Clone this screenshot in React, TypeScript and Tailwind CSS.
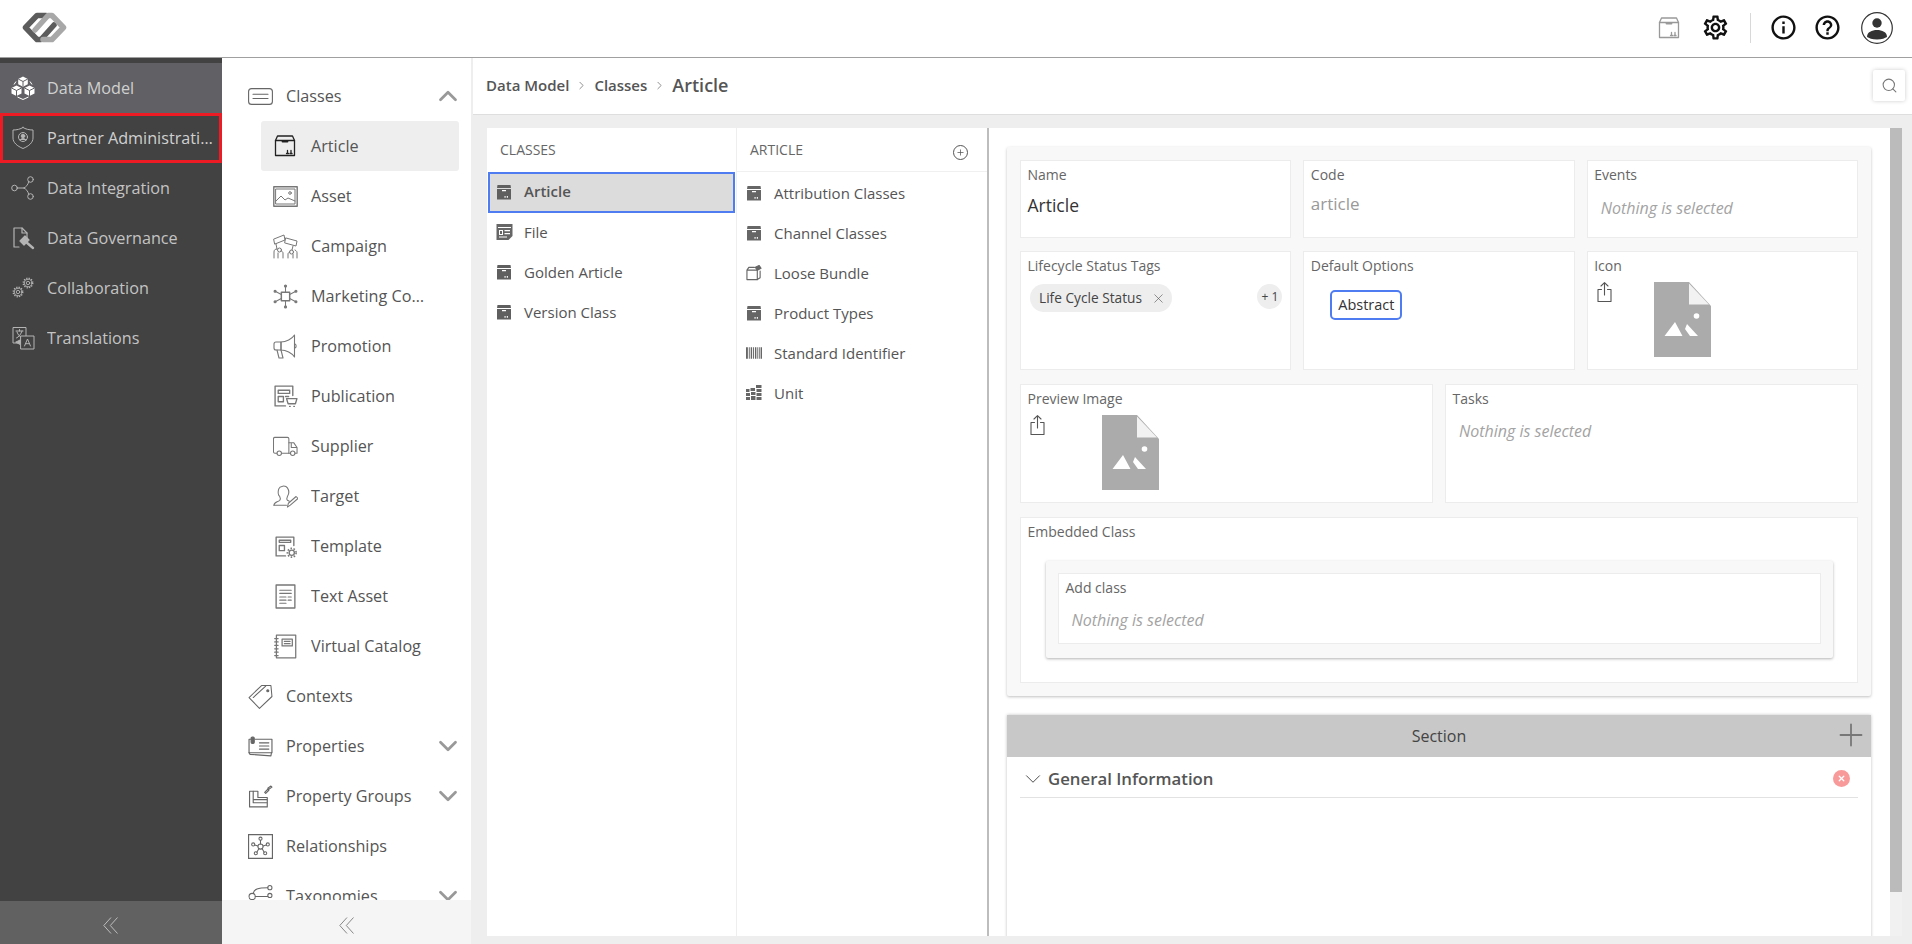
import React from 'react';
import { ChevronUp, ChevronDown, ChevronRight, Search, X, Plus } from 'lucide-react';
import { MdOutlineSettings, MdInfoOutline, MdHelpOutline } from 'react-icons/md';

type IconProps = { className?: string };

// line icons share the same stroke setup
const Line = ({ className, children, box = '0 0 24 24', sw = 1 }: IconProps & { children: React.ReactNode; box?: string; sw?: number }) => (
  <svg viewBox={box} fill="none" stroke="currentColor" strokeWidth={sw} strokeLinecap="round" strokeLinejoin="round" className={className}>
    {children}
  </svg>
);

const Gear = ({ cx, cy, r }: { cx: number; cy: number; r: number }) => (
  <g>
    <circle cx={cx} cy={cy} r={r} />
    <circle cx={cx} cy={cy} r={r * 0.45} />
    <circle cx={cx} cy={cy} r={r * 1.25} strokeWidth={1.4} strokeDasharray="1.2 1.3" strokeLinecap="butt" />
  </g>
);

const Logo = () => (
  <svg viewBox="0 0 45 31" fill="none" strokeWidth={5.500} strokeLinecap="round" strokeLinejoin="round" className="w-[45px] h-[31px]">
    <path d="M24 3.500 H15 L3.500 15.500 L15 27.500 H19 L32 13" stroke="#5c5c5c" />
    <path d="M21 27.500 H30 L41.500 15.500 L30 3.500 H26 L13 18" stroke="#a8a8a8" />
  </svg>
);

const DoubleLeft = ({ className }: IconProps) => (
  <svg viewBox="0 0 15 17" fill="none" stroke="currentColor" strokeWidth={1} className={className}>
    <path d="M8 .5L.8 8.500 8 16.500M14.500 .5L7.300 8.500l7.200 8" />
  </svg>
);

const CubesIcon = ({ className }: IconProps) => (
  <svg viewBox="0 0 24 24" fill="currentColor" className={className}>
    <path d="M12 .5l4.800 2.500v5.200L12 10.700 7.200 8.200V3z" />
    <path d="M5.500 9.500l5 2.500v5.500l-5 2.500-5-2.500V12z" />
    <path d="M18.500 9.500l5 2.500v5.500l-5 2.500-5-2.500V12z" />
    <path d="M6.500 21l5.500 2.500 5.500-2.500M3 8.500l2-3M21 8.500l-2-3" fill="none" stroke="currentColor" strokeWidth="1" />
    <path d="M7.200 3L12 5.500 16.800 3M12 5.500v5M.5 12l5 2.500 5-2.500M5.500 14.500V20M13.500 12l5 2.500 5-2.500M18.500 14.500V20" fill="none" stroke="#616165" strokeWidth="1" />
  </svg>
);

const ShieldIcon = ({ className }: IconProps) => (
  <Line className={className}>
    <path d="M12 1.500c2.500 1.600 6 2.500 10 2.500v8c0 4.500-4 8-10 10.500C6 20 2 16.500 2 12V4c4 0 7.500-.9 10-2.500z" />
    <circle cx="12" cy="11" r="4.500" />
    <circle cx="12" cy="10" r="1.800" fill="currentColor" />
    <path d="M9 14c1-2 5-2 6 0" fill="currentColor" />
  </Line>
);

const ShareNodes = ({ className }: IconProps) => (
  <Line className={className}>
    <circle cx="3.500" cy="12" r="2.800" />
    <circle cx="19.500" cy="3.500" r="2.800" />
    <circle cx="19.500" cy="20.500" r="2.800" />
    <path d="M6.300 12H13M13 12c2-1 4-3 4.800-6.500M13 12c2 1 4 3 4.800 6.500" />
  </Line>
);

const GavelDoc = ({ className }: IconProps) => (
  <Line className={className} sw={1.2}>
    <path d="M16 13V7l-5-5H3v19h5" />
    <path d="M11 2v5h5" />
    <path d="M9 15l5-5 4 4-5 5z" fill="currentColor" />
    <path d="M15 16l7 6" strokeWidth={2.400} />
  </Line>
);

const GearsIcon = ({ className }: IconProps) => (
  <Line className={className} sw={.9}>
    <Gear cx={7} cy={16} r={3.800} />
    <Gear cx={17} cy={7} r={3.800} />
  </Line>
);

const TranslateIcon = ({ className }: IconProps) => (
  <Line className={className} sw={1}>
    <path d="M9 17H2V1.500h13V10" />
    <path d="M5 5h7M8.500 3.500V5M11 5c-1 3-3 6-5.500 7M6 6c1 3 3 5 5 6" />
    <path d="M10 10h13v13H10z" fill="#424242" />
    <path d="M13.500 20l3-7 3 7M14.800 17.700h3.400" />
    <path d="M5 16l4-2v4z" fill="currentColor" />
  </Line>
);

const ClassesIcon = ({ className }: IconProps) => (
  <Line className={className} box="0 0 25 17" sw={1.100}>
    <rect x=".6" y=".6" width="23.800" height="15.800" rx="3" />
    <path d="M5 6.300h15M5 10.500h15" />
  </Line>
);

const BoxIcon = ({ className }: IconProps) => (
  <Line className={className} sw={1.300}>
    <path d="M2.500 6.500V21.500h19V6.500l-2-4.500h-15z" />
    <path d="M2.500 6.500h19" />
    <path d="M9.500 7.500h5" strokeWidth={1.800} />
    <path d="M14.500 19.500v-3M18 19.500v-3M13.500 19.500h2M17 19.500h2" />
  </Line>
);

// solid variant used in the class lists
const BoxSolid = ({ className }: IconProps) => (
  <svg viewBox="0 0 16 16" fill="currentColor" className={className}>
    <path d="M1 5h14v10.500H1z" />
    <path d="M1.500 1h13L15 4H1z" />
    <path d="M6 6h4v1.200H6zM8.500 12h1.100v1.800H8.500zM10.800 12h1.100v1.800h-1.100z" fill="#fff" />
  </svg>
);

const PictureIcon = ({ className }: IconProps) => (
  <Line className={className} box="0 0 25 21" sw={1}>
    <rect x=".8" y=".8" width="23.400" height="19.400" strokeWidth={1.400} />
    <rect x="3" y="3" width="19" height="15" />
    <path d="M3 15l5-5 4 4 3-2 7 3" />
    <circle cx="17" cy="7" r="1.300" />
  </Line>
);

const CampaignIcon = ({ className }: IconProps) => (
  <Line className={className} box="0 0 25 25" sw={1}>
    <path d="M1 5l10-4 1 5-10 4zM13 4l11 3-1 5-11-3z" />
    <path d="M3 10l1 5M20 12l-1 4" />
    <circle cx="6.500" cy="16" r="2" />
    <circle cx="18.500" cy="18" r="2" />
    <path d="M1 24v-6c0-2 1-3 3-3M5 24v-5M10 24v-5c0-1-1-2-2-2M24 24v-5c0-1 0-2-2-3M15 24v-4c0-1 1-2 2-2M20 24v-4" />
  </Line>
);

const HubIcon = ({ className }: IconProps) => (
  <Line className={className} sw={1}>
    <rect x="8" y="8" width="8" height="8" strokeWidth={1.400} />
    <path d="M12 8V3M12 16v5M8 10L3 7.500M8 14l-5 2.500M16 10l5-2.500M16 14l5 2.500" />
    <circle cx="12" cy="2" r="1" fill="currentColor" />
    <circle cx="12" cy="22" r="1" fill="currentColor" />
    <circle cx="2" cy="7" r="1" fill="currentColor" />
    <circle cx="2" cy="17" r="1" fill="currentColor" />
    <circle cx="22" cy="7" r="1" fill="currentColor" />
    <circle cx="22" cy="17" r="1" fill="currentColor" />
  </Line>
);

const MegaphoneIcon = ({ className }: IconProps) => (
  <Line className={className} box="0 0 25 25" sw={1.100}>
    <path d="M8 8C13 8 19 5 21.500 1v22C19 19 13 16 8 16z" />
    <path d="M8 8H3C1.500 8 1 9 1 10v4c0 1 .5 2 2 2h5zM22 10c1.500.500 1.500 3.500 0 4" />
    <path d="M4 16l2 8h4l-2-8" />
  </Line>
);

const PublicationIcon = ({ className }: IconProps) => (
  <Line className={className} sw={1.300}>
    <path d="M12 21H2V2h17v9" />
    <path d="M5 6h11v3H5zM5 12h5v5H5zM12 12h3" />
    <path d="M13 14h10l-1.500 5h-7zM16 21.500h.5M20 21.500h.5" />
  </Line>
);

const TruckIcon = ({ className }: IconProps) => (
  <Line className={className} box="0 0 26 20" sw={1.100}>
    <path d="M4 17H2c-1 0-1.500-.5-1.500-1.500V2C.5 1 1 .5 2 .5h13c1 0 1.500.5 1.500 1.500v15H9" />
    <path d="M16.500 6h5l3.500 5v6h-2M18 17h-1.500M19 7v4h6" />
    <circle cx="6.500" cy="17" r="2.300" />
    <circle cx="20.500" cy="17" r="2.300" />
  </Line>
);

const TargetIcon = ({ className }: IconProps) => (
  <Line className={className} box="0 0 26 24" sw={1.100}>
    <path d="M1 21c0-3 3-3 6-5 1-1 1-2 0-4-2-2-2-5-1-8 1-3 7-4 9-1 2 3 2 6 0 9-1 2-1 3 0 4l2 1" />
    <path d="M1 21h13" />
    <path d="M15 23l1-4 8-7 2 2-8 7z" />
  </Line>
);

const TemplateIcon = ({ className }: IconProps) => (
  <Line className={className} sw={1.300}>
    <path d="M12 21H3V3h17v8" />
    <path d="M6 6h11v2H6zM6 11h5v5H6z" />
    <circle cx="18" cy="18" r="2.500" />
    <circle cx="18" cy="18" r="4.200" strokeWidth={1.500} strokeDasharray="1.500 1.500" strokeLinecap="butt" />
  </Line>
);

const TextAssetIcon = ({ className }: IconProps) => (
  <Line className={className} box="0 0 20 24" sw={1.100}>
    <rect x="1" y="1" width="18" height="22" strokeWidth={1.300} />
    <path d="M4.500 6h11M4.500 9h11M4.500 12.500h6M12.500 12.500h3M4.500 15.500h6M12.500 15.500h3M4.500 18.500h6" />
  </Line>
);

const CatalogIcon = ({ className }: IconProps) => (
  <Line className={className} box="0 0 20 22" sw={1.100}>
    <path d="M2 1h17v20H2z" />
    <path d="M.5 4h3M.5 7h3M.5 10h3M.5 13h3M.5 16h3M.5 19h3" />
    <rect x="7" y="4.500" width="9" height="6" />
    <path d="M9 6.500h5M9 8.500h5" />
  </Line>
);

const TagIcon = ({ className }: IconProps) => (
  <Line className={className} sw={1}>
    <path d="M1 13L13 1.500h9L23 12 11 23.500z" />
    <path d="M17 2l-12 11" />
    <circle cx="19" cy="6.500" r="1" fill="currentColor" />
  </Line>
);

const PropertiesIcon = ({ className }: IconProps) => (
  <Line className={className} box="0 0 24 20" sw={1.100}>
    <path d="M4 3H1v13h22V3H7" />
    <path d="M1 16l1 1.500 20 1.500 .5-3" />
    <path d="M11 6.500h9M11 9.500h9M11 12.500h9" />
    <rect x="3" y="1" width="3" height="6" rx="1" fill="currentColor" />
  </Line>
);

const GroupsIcon = ({ className }: IconProps) => (
  <Line className={className} sw={1.100}>
    <path d="M1.500 7h8v6h9v9h-17z" />
    <path d="M5 7v8h13M5 15v3h13" />
    <path d="M16 8l3-3 1 1-3 3zM19 4l3-2 1 1-3 2z" />
  </Line>
);

const RelationsIcon = ({ className }: IconProps) => (
  <Line className={className} sw={1}>
    <rect x=".5" y=".5" width="23" height="23" strokeWidth={1.200} />
    <circle cx="12" cy="12" r="2.500" />
    <circle cx="12" cy="4.500" r="1.500" />
    <circle cx="5" cy="10" r="1.500" />
    <circle cx="19" cy="10" r="1.500" />
    <circle cx="7.500" cy="18.500" r="1.500" />
    <circle cx="16.500" cy="18.500" r="1.500" />
    <path d="M12 6v3.500M6.500 10.500l3 1M17.500 10.500l-3 1M8.500 17.500l2-3.500M15.500 17.500l-2-3.500" />
  </Line>
);

const TaxonomyIcon = ({ className }: IconProps) => (
  <Line className={className} sw={1}>
    <circle cx="4" cy="12" r="3" />
    <circle cx="21" cy="3.500" r="2" />
    <circle cx="21" cy="11" r="2" />
    <circle cx="21" cy="19" r="2" />
    <path d="M5 9c1-4 4-5.500 14-5.500M7 12h12M5 15c1 4 4 4 14 4" />
  </Line>
);

const FileListIcon = ({ className }: IconProps) => (
  <svg viewBox="0 0 17 16" fill="currentColor" className={className}>
    <path d="M.5 0h16v12l-4 4H.5z" />
    <path d="M2 3h13v1H2zM3 6h4v5H3zM8.500 6H14v1.200H8.500zM8.500 9H14v1.200H8.500zM3 12.500h8v1H3z" fill="#fff" />
    <path d="M4 7h2v3H4z" />
  </svg>
);

const BundleIcon = ({ className }: IconProps) => (
  <Line className={className} box="0 0 17 16" sw={1.200}>
    <path d="M1 5h11v10H1zM1 5l2-3h6" />
    <path d="M12 5l4-2-2-3-4 2z" fill="currentColor" />
    <path d="M12 15l3-2V6" />
  </Line>
);

const BarcodeIcon = ({ className }: IconProps) => (
  <svg viewBox="0 0 17 12" fill="currentColor" className={className}>
    <path d="M0 0h2v12H0zM3 0h1v12H3zM5 0h1.500v12H5zM7.500 0h1v12h-1zM9.500 0H11v12H9.500zM12 0h1v12h-1zM14 0h.8v12H14zM15.500 0H17v12h-1.500z" />
  </svg>
);

const UnitIcon = ({ className }: IconProps) => (
  <svg viewBox="0 0 16 16" fill="currentColor" className={className}>
    <path d="M0 4h3.500v3H0zM4.500 3H9v3H4.500zM10 0h5.500v3H10zM0 8h4v3H0zM5 7h4.500v3H5zM10.500 4h5v3h-5zM0 12h4v3H0zM5 11h4.500v4H5zM10.500 8h5v3h-5zM10.500 12h5v3h-5z" />
  </svg>
);

const ShareUp = ({ className }: IconProps) => (
  <Line className={className} box="0 0 15 20" sw={1.100}>
    <path d="M4.500 7.500H1v12h13v-12h-3.500" />
    <path d="M7.500 13V1M4 4l3.500-3.300L11 4" />
  </Line>
);

const FilePlaceholder = () => (
  <svg viewBox="0 0 57 75" className="w-[57px] h-[75px]">
    <path d="M0 0h35l22 24v51H0z" fill="#ababab" />
    <path d="M35 1.500v21h20z" fill="#f2f2f2" />
    <circle cx="42.500" cy="34" r="2.800" fill="#fff" />
    <path d="M10.500 54L21 40l7.500 14zM33 42l11 12h-8l-5-7z" fill="#fff" />
  </svg>
);

const Avatar = () => (
  <svg viewBox="0 0 32 32" className="w-[32px] h-[32px]">
    <circle cx="16" cy="16" r="15.300" fill="none" stroke="#333" strokeWidth="1.200" />
    <circle cx="16" cy="11" r="4.700" fill="#333" />
    <path d="M6 25c0-5 5-7 10-7s10 2 10 7c-2 1-5 2.500-10 2.500S8 26 6 25z" fill="#333" />
  </svg>
);

const mainNav: { label: string; Icon: (p: IconProps) => React.ReactElement; active?: boolean; flagged?: boolean }[] = [
  { label: 'Data Model', Icon: CubesIcon, active: true },
  { label: 'Partner Administration', Icon: ShieldIcon, flagged: true },
  { label: 'Data Integration', Icon: ShareNodes },
  { label: 'Data Governance', Icon: GavelDoc },
  { label: 'Collaboration', Icon: GearsIcon },
  { label: 'Translations', Icon: TranslateIcon },
];

const subClasses = [
  { label: 'Asset', Icon: PictureIcon },
  { label: 'Campaign', Icon: CampaignIcon },
  { label: 'Marketing Communication', Icon: HubIcon },
  { label: 'Promotion', Icon: MegaphoneIcon },
  { label: 'Publication', Icon: PublicationIcon },
  { label: 'Supplier', Icon: TruckIcon },
  { label: 'Target', Icon: TargetIcon },
  { label: 'Template', Icon: TemplateIcon },
  { label: 'Text Asset', Icon: TextAssetIcon },
  { label: 'Virtual Catalog', Icon: CatalogIcon },
];

const topLevel = [
  { label: 'Contexts', Icon: TagIcon, more: false },
  { label: 'Properties', Icon: PropertiesIcon, more: true },
  { label: 'Property Groups', Icon: GroupsIcon, more: true },
  { label: 'Relationships', Icon: RelationsIcon, more: false },
  { label: 'Taxonomies', Icon: TaxonomyIcon, more: true },
];

const articleChildren = [
  { label: 'Attribution Classes', Icon: BoxSolid },
  { label: 'Channel Classes', Icon: BoxSolid },
  { label: 'Loose Bundle', Icon: BundleIcon },
  { label: 'Product Types', Icon: BoxSolid },
  { label: 'Standard Identifier', Icon: BarcodeIcon },
  { label: 'Unit', Icon: UnitIcon },
];

const Field = ({ label, className = '', children }: { label: string; className?: string; children?: React.ReactNode }) => (
  <div className={`bg-white border border-[#ececec] px-[6.5px] pt-[4px] ${className}`}>
    <div className="text-[14px] leading-[20px] text-[#666]">{label}</div>
    {children}
  </div>
);

const Nothing = ({ className = '' }: { className?: string }) => (
  <div className={`text-[16px] leading-[20px] italic text-[#a3a3a3] ${className}`}>Nothing is selected</div>
);

export default function App() {
  return (
    <div className="w-[1912px] h-[944px] flex flex-col overflow-hidden bg-white text-[#555] font-['Open_Sans',sans-serif]">
      {/* Top bar */}
      <header className="h-[58px] shrink-0 flex items-center border-b border-[#a0a0a0] pl-[22px] pr-[19px] pb-[2px]">
        <Logo />
        <div className="ml-auto flex items-center">
          <BoxIcon className="w-[24px] h-[24px] text-[#999]" />
          <MdOutlineSettings className="w-[29px] h-[29px] ml-[20px] text-[#111]" />
          <div className="w-px h-[30px] bg-[#d8d8d8] ml-[20px]" />
          <MdInfoOutline className="w-[29px] h-[29px] ml-[18px] text-[#111]" />
          <MdHelpOutline className="w-[29px] h-[29px] ml-[15px] text-[#111]" />
          <div className="ml-[19px]"><Avatar /></div>
        </div>
      </header>

      <div className="flex-1 flex min-h-0">
        {/* Main navigation */}
        <aside className="w-[222px] shrink-0 bg-[#424242] flex flex-col pt-[5px]">
          {mainNav.map(({ label, Icon, active, flagged }) => (
            <div
              key={label}
              className={`h-[50px] shrink-0 flex items-center text-[16.2px] ${active ? 'bg-[#616165] text-[#d0d0d0]' : 'text-[#c4c4c4]'} ${flagged ? 'border-[3px] border-[#ed1c24] pl-[8px] pr-[2px] text-[#d0d0d0]' : 'pl-[11px] pr-[6px]'}`}
            >
              <Icon className={`w-[24px] h-[24px] shrink-0 ${active ? 'text-white' : 'text-[#b4b4b4]'}`} />
              <span className="ml-[12px] truncate">{label}</span>
            </div>
          ))}
          <div className="mt-auto h-[43px] bg-[#616161] flex items-center justify-center pt-[6px] pr-[2px]">
            <DoubleLeft className="w-[15px] h-[17px] text-[#bdbdbd]" />
          </div>
        </aside>

        {/* Secondary navigation */}
        <aside className="w-[249px] shrink-0 flex flex-col bg-white">
          <div className="flex-1 min-h-0 overflow-hidden pt-[13px] pl-[26px] pr-[12px] text-[16.2px] text-[#555]">
            <div className="h-[50px] flex items-center">
              <ClassesIcon className="w-[25px] h-[17px] text-[#666]" />
              <span className="ml-[13px]">Classes</span>
              <ChevronUp strokeWidth={2.200} className="ml-auto -mr-[4px] w-[30px] h-[30px] text-[#999]" />
            </div>
            <div className="ml-[13px] h-[50px] flex items-center rounded-[3px] bg-[#eeeeee] pl-[12px]">
              <BoxIcon className="w-[24px] h-[24px] text-[#222]" />
              <span className="ml-[14px]">Article</span>
            </div>
            {subClasses.map(({ label, Icon }) => (
              <div key={label} className="ml-[13px] h-[50px] flex items-center pl-[12px]">
                <div className="w-[25px] flex justify-center shrink-0">
                  <Icon className="w-[25px] h-[25px] text-[#777]" />
                </div>
                <span className="ml-[13px] w-[116px] truncate">{label}</span>
              </div>
            ))}
            {topLevel.map(({ label, Icon, more }) => (
              <div key={label} className="h-[50px] flex items-center">
                <Icon className="w-[25px] h-[25px] shrink-0 text-[#666]" />
                <span className="ml-[13px]">{label}</span>
                {more && <ChevronDown strokeWidth={2.200} className="ml-auto -mr-[4px] w-[30px] h-[30px] text-[#999]" />}
              </div>
            ))}
          </div>
          <div className="h-[44px] shrink-0 bg-[#f5f5f5] flex items-center justify-center pt-[6px]">
            <DoubleLeft className="w-[15px] h-[17px] text-[#888]" />
          </div>
        </aside>

        {/* Workspace */}
        <main className="flex-1 min-w-0 bg-[#eeeeee] pl-[2px] flex flex-col">
          <div className="h-[57px] shrink-0 bg-white border-b border-[#dedede] flex items-center pl-[13px] pr-[7px] pb-[2px] font-semibold text-[15px] text-[#555]">
            <span>Data Model</span>
            <ChevronRight strokeWidth={1.500} className="mx-[6px] w-[13px] h-[13px] text-[#777]" />
            <span>Classes</span>
            <ChevronRight strokeWidth={1.500} className="mx-[6px] w-[13px] h-[13px] text-[#777]" />
            <span className="text-[18px]">Article</span>
            <button className="ml-auto w-[32px] h-[31px] rounded-[2px] bg-white shadow-[0_0_4px_rgba(0,0,0,0.2)] flex items-center justify-center">
              <Search strokeWidth={1.500} className="w-[17px] h-[17px] text-[#777]" />
            </button>
          </div>

          <div className="flex-1 min-h-0 flex ml-[14px] mr-[10px] mt-[13px] mb-[8px] bg-white">
            {/* Classes column */}
            <div className="w-[250px] shrink-0 border-r border-[#eeeeee]">
              <div className="h-[44px] pl-[13px] flex items-center text-[14px] text-[#666] pb-[1px]">CLASSES</div>
              <div className="h-[41px] mx-px border-2 border-[#4f7cf0] bg-[#dcdcdc] flex items-center pl-[6px] pb-[2px] font-semibold text-[15px]">
                <BoxSolid className="w-[16px] h-[16px] text-[#5f5f5f]" />
                <span className="ml-[12px]">Article</span>
              </div>
              <div className="h-[40px] flex items-center pl-[9px] pb-[2px] text-[15px]">
                <FileListIcon className="w-[17px] h-[16px] text-[#666]" />
                <span className="ml-[11px]">File</span>
              </div>
              <div className="h-[40px] flex items-center pl-[9px] pb-[2px] text-[15px]">
                <BoxSolid className="w-[16px] h-[16px] text-[#5f5f5f]" />
                <span className="ml-[12px]">Golden Article</span>
              </div>
              <div className="h-[40px] flex items-center pl-[9px] pb-[2px] text-[15px]">
                <BoxSolid className="w-[16px] h-[16px] text-[#5f5f5f]" />
                <span className="ml-[12px]">Version Class</span>
              </div>
            </div>

            {/* Article column */}
            <div className="w-[252px] shrink-0 border-r-2 border-[#bdbdbd]">
              <div className="h-[44px] pl-[13px] pr-[19px] flex items-center justify-between text-[14px] text-[#666] border-b border-[#f0f0f0] mb-[1px]">
                <span>ARTICLE</span>
                <span className="w-[15px] h-[15px] rounded-full border border-[#555] flex items-center justify-center mt-[6px]">
                  <Plus strokeWidth={2} className="w-[9px] h-[9px] text-[#555]" />
                </span>
              </div>
              {articleChildren.map(({ label, Icon }) => (
                <div key={label} className="h-[40px] flex items-center pl-[9px] text-[15px]">
                  <div className="w-[17px] flex justify-start">
                    <Icon className="w-[16px] h-[16px] text-[#666]" />
                  </div>
                  <span className="ml-[11px]">{label}</span>
                </div>
              ))}
            </div>

            {/* Detail */}
            <div className="flex-1 min-w-0 overflow-hidden pl-[18px] pr-[19px] pt-[19px]">
              <div className="bg-[#f8f8f8] rounded-[2px] shadow-[0_1px_3px_rgba(0,0,0,0.25)] px-[13px] pt-[13px] pb-[13px]">
                <div className="grid grid-cols-3 gap-x-[12px]">
                  <Field label="Name" className="h-[78px]">
                    <div className="mt-[8px] text-[17.5px] leading-[24px] text-[#333]">Article</div>
                  </Field>
                  <Field label="Code" className="h-[78px]">
                    <div className="mt-[7px] text-[17px] leading-[24px] text-[#999]">article</div>
                  </Field>
                  <Field label="Events" className="h-[78px]">
                    <Nothing className="mt-[13px] ml-[6.5px]" />
                  </Field>
                </div>
                <div className="grid grid-cols-3 gap-x-[12px] mt-[13px]">
                  <Field label="Lifecycle Status Tags" className="h-[119px]">
                    <div className="mt-[8px] ml-[2.5px] flex items-start justify-between pr-[1.5px]">
                      <div className="h-[28px] w-[142px] rounded-full bg-[#eeeeee] flex items-center pl-[9px] text-[13.7px] text-[#444]">
                        Life Cycle Status
                        <X strokeWidth={1} className="w-[15px] h-[15px] ml-[9px] text-[#555]" />
                      </div>
                      <div className="w-[25px] h-[25px] rounded-full bg-[#eeeeee] flex items-center justify-center text-[12px] text-[#444]">+ 1</div>
                    </div>
                  </Field>
                  <Field label="Default Options" className="h-[119px]">
                    <div className="mt-[14px] ml-[19.5px] w-[72px] h-[30px] rounded-[5px] border-2 border-[#4f7cf0] flex items-center justify-center text-[14.5px] text-[#333]">Abstract</div>
                  </Field>
                  <Field label="Icon" className="h-[119px]">
                    <div className="mt-[6px] ml-[2.5px] flex items-start">
                      <ShareUp className="w-[15px] h-[20px] text-[#555]" />
                      <div className="ml-[42px]"><FilePlaceholder /></div>
                    </div>
                  </Field>
                </div>
                <div className="grid grid-cols-2 gap-x-[12px] mt-[14px]">
                  <Field label="Preview Image" className="h-[119px]">
                    <div className="mt-[6px] ml-[2.5px] flex items-start">
                      <ShareUp className="w-[15px] h-[20px] text-[#555]" />
                      <div className="ml-[57px]"><FilePlaceholder /></div>
                    </div>
                  </Field>
                  <Field label="Tasks" className="h-[119px]">
                    <Nothing className="mt-[12px] ml-[6.5px]" />
                  </Field>
                </div>
                <Field label="Embedded Class" className="h-[166px] mt-[14px]">
                  <div className="mt-[19px] ml-[18.5px] mr-[17.5px] h-[97px] bg-[#f8f8f8] rounded-[2px] shadow-[0_1px_3px_rgba(0,0,0,0.3)] p-[12px] pb-[14px]">
                    <Field label="Add class" className="h-[71px]">
                      <Nothing className="mt-[12px] ml-[6px]" />
                    </Field>
                  </div>
                </Field>
              </div>

              <section className="mt-[19px] h-[260px] bg-white shadow-[0_0_3px_rgba(0,0,0,0.25)]">
                <div className="h-[42px] bg-[#c8c8c8] relative flex items-center justify-center text-[16px] text-[#444]">
                  Section
                  <Plus strokeWidth={1.200} className="absolute right-[2px] top-[2px] w-[36px] h-[36px] text-[#777]" />
                </div>
                <div className="mx-[13px] h-[41px] border-b border-[#e2e2e2] flex items-center font-semibold text-[16.8px] text-[#555] pt-[3px]">
                  <ChevronDown strokeWidth={.8} className="w-[26px] h-[26px] text-[#333] mr-[2px]" />
                  General Information
                  <span className="ml-auto mr-[8px] w-[17px] h-[17px] rounded-full bg-[#f89a9a] flex items-center justify-center">
                    <X strokeWidth={3.500} className="w-[9px] h-[9px] text-white" />
                  </span>
                </div>
              </section>
            </div>

            {/* Scroll track */}
            <div className="w-[12px] shrink-0 bg-[#f1f1f1]">
              <div className="h-[764px] bg-[#bbbbbb]" />
            </div>
          </div>
        </main>
      </div>
    </div>
  );
}
